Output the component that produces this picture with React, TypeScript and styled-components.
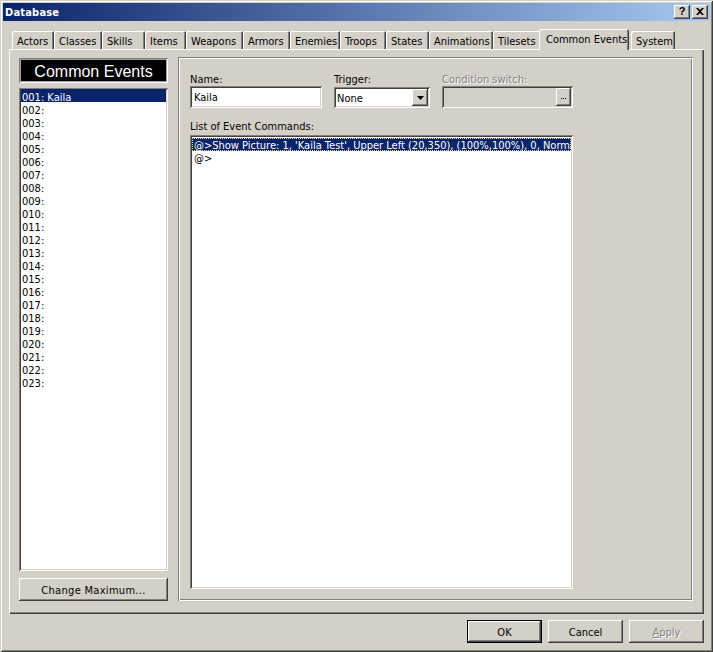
import React from 'react';
import styled, { createGlobalStyle, css } from 'styled-components';

const UI_FONT = `"DejaVu Sans Condensed", "Liberation Sans", sans-serif`;

const GlobalStyle = createGlobalStyle`
    html, body {
        margin: 0;
        padding: 0;
        background: #d4d0c8;
    }
    body {
        font-family: ${UI_FONT};
        font-size: 11px;
        color: #000;
    }
    * {
        box-sizing: border-box;
    }
`;

// classic 3d edges
const raised = css`
    box-shadow: inset -1px -1px 0 #404040, inset 1px 1px 0 #ffffff,
        inset -2px -2px 0 #808080, inset 2px 2px 0 #d4d0c8;
`;

const sunken = css`
    box-shadow: inset 1px 1px 0 #808080, inset -1px -1px 0 #ffffff,
        inset 2px 2px 0 #404040, inset -2px -2px 0 #d4d0c8;
`;

const Window = styled.div`
    width: 713px;
    height: 652px;
    padding: 3px;
    background: #d4d0c8;
    display: flex;
    flex-direction: column;
    box-shadow: inset 1px 1px 0 #d4d0c8, inset -1px -1px 0 #404040,
        inset 2px 2px 0 #ffffff, inset -2px -2px 0 #808080;
`;

const TitleBar = styled.div`
    height: 18px;
    display: flex;
    align-items: center;
    padding: 0 2px 0 2px;
    background: linear-gradient(to right, #0a246a, #a6caf0);
`;

const Title = styled.div`
    flex: 1;
    color: #ffffff;
    font-weight: bold;
    font-size: 11px;
    line-height: 13px;
    letter-spacing: 0.2px;
`;

const CaptionButtons = styled.div`
    display: flex;
    gap: 2px;
`;

const CaptionButton = styled.div`
    width: 16px;
    height: 14px;
    background: #d4d0c8;
    ${raised};
    display: flex;
    align-items: center;
    justify-content: center;
    font-family: "Liberation Sans", sans-serif;
    font-weight: bold;
    font-size: 11px;
    line-height: 11px;
    padding-bottom: 1px;
`;

const Body = styled.div`
    flex: 1;
    display: flex;
    flex-direction: column;
    padding: 8px 6px 6px 6px;
`;

const TabStrip = styled.div`
    position: relative;
    z-index: 1;
    height: 20px;
    display: flex;
    align-items: flex-end;
    padding-left: 3px;
`;

const Tab = styled.div<{ $w: number; $active?: boolean; $gap?: number }>`
    width: ${p => p.$w}px;
    height: ${p => (p.$active ? 21 : 18)}px;
    margin-bottom: ${p => (p.$active ? -1 : 0)}px;
    margin-left: ${p => p.$gap || 0}px;
    padding: ${p => (p.$active ? '4px 0 0 7px' : '4px 0 0 5px')};
    line-height: 13px;
    white-space: nowrap;
    overflow: hidden;
    background: #d4d0c8;
    border-radius: 2px 2px 0 0;
    box-shadow: inset 1px 1px 0 #ffffff, inset -1px 0 0 #404040, inset -2px 0 0 #808080;
`;

const TabPanel = styled.div`
    height: 565px;
    display: flex;
    gap: 10px;
    padding: 8px 11px 13px 10px;
    box-shadow: inset 1px 1px 0 #ffffff, inset -1px -1px 0 #404040,
        inset -2px -2px 0 #808080;
`;

const LeftColumn = styled.div`
    width: 149px;
    margin-top: 1px;
    display: flex;
    flex-direction: column;
`;

const ListHeader = styled.div`
    height: 25px;
    background: #000;
    color: #fff;
    font-family: "Liberation Sans", sans-serif;
    font-size: 16px;
    line-height: 27px;
    text-align: center;
    box-shadow: inset 1px 1px 0 #808080, inset -1px -1px 0 #ffffff,
        inset 2px 2px 0 #a0a0a0, inset -2px -2px 0 #a0a0a0;
`;

const ListBox = styled.div`
    background: #ffffff;
    ${sunken};
    padding: 2px;
    overflow: hidden;
`;

const EventList = styled(ListBox)`
    height: 484px;
    margin-top: 5px;
    padding-top: 1px;
`;

const Row = styled.div<{ $selected?: boolean }>`
    height: 13px;
    line-height: 13px;
    padding: 2px 0 0 1px;
    white-space: nowrap;
    background: ${p => (p.$selected ? '#0a246a' : 'transparent')};
    color: ${p => (p.$selected ? '#ffffff' : '#000000')};
`;

const Button = styled.div<{ $default?: boolean; $disabled?: boolean }>`
    height: 23px;
    padding-top: 1px;
    display: flex;
    align-items: center;
    justify-content: center;
    background: #d4d0c8;
    ${raised};
    ${p =>
        p.$default &&
        css`
            box-shadow: inset 0 0 0 1px #000000, inset -2px -2px 0 #404040,
                inset 2px 2px 0 #ffffff, inset -3px -3px 0 #808080;
        `}
    color: ${p => (p.$disabled ? '#808080' : '#000000')};
    text-shadow: ${p => (p.$disabled ? '1px 1px 0 #ffffff' : 'none')};
`;

const WideButton = styled(Button)`
    margin-top: 7px;
    letter-spacing: 0.3px;
`;

const GroupBox = styled.div`
    flex: 1;
    display: flex;
    flex-direction: column;
    padding: 16px 12px 12px 12px;
    box-shadow: inset 1px 1px 0 #808080, inset 2px 2px 0 #ffffff,
        inset -1px -1px 0 #ffffff, inset -2px -2px 0 #808080;
`;

const FieldRow = styled.div`
    display: flex;
    gap: 12px;
`;

const Field = styled.div<{ $w: number }>`
    width: ${p => p.$w}px;
    display: flex;
    flex-direction: column;
`;

const Label = styled.div<{ $disabled?: boolean }>`
    height: 13px;
    line-height: 13px;
    white-space: nowrap;
    color: ${p => (p.$disabled ? '#808080' : '#000000')};
    text-shadow: ${p => (p.$disabled ? '1px 1px 0 #ffffff' : 'none')};
`;

const TextInput = styled.div<{ $disabled?: boolean }>`
    height: 22px;
    line-height: 18px;
    padding: 3px 4px 1px 4px;
    background: ${p => (p.$disabled ? '#d4d0c8' : '#ffffff')};
    ${sunken};
    display: flex;
    align-items: center;
    justify-content: space-between;
`;

const DisabledInput = styled(TextInput)`
    padding: 2px;
`;

const Select = styled.div`
    height: 21px;
    margin-top: 1px;
    padding: 2px 2px 2px 3px;
    background: #ffffff;
    ${sunken};
    display: flex;
    align-items: center;
    justify-content: space-between;
`;

const SelectValue = styled.span`
    padding-top: 2px;
`;

const DropButton = styled.div`
    width: 16px;
    height: 17px;
    background: #d4d0c8;
    ${raised};
    display: flex;
    align-items: center;
    justify-content: center;
`;

const EllipsisButton = styled.div`
    width: 15px;
    height: 18px;
    background: #d4d0c8;
    ${raised};
    display: flex;
    align-items: flex-end;
    justify-content: center;
    gap: 1px;
    padding-bottom: 7px;
`;

const Dot = styled.span`
    width: 1px;
    height: 1px;
    background: #000;
`;

const SectionLabel = styled(Label)`
    margin-top: 12px;
`;

const CommandList = styled(ListBox)`
    width: 383px;
    flex: 1;
    margin-top: 2px;
    padding-top: 3px;
`;

const CommandRow = styled(Row)`
    padding: 1px 0 0 2px;
    ${p =>
        p.$selected &&
        css`
            outline: 1px dotted #f5db95;
            outline-offset: -1px;
        `}
`;

const ButtonRow = styled.div`
    display: flex;
    justify-content: flex-end;
    gap: 6px;
    margin-top: 6px;
`;

const DialogButton = styled(Button)`
    width: 75px;
`;

const tabs = [
    { label: 'Actors', w: 42 },
    { label: 'Classes', w: 48 },
    { label: 'Skills', w: 43 },
    { label: 'Items', w: 41 },
    { label: 'Weapons', w: 57 },
    { label: 'Armors', w: 47 },
    { label: 'Enemies', w: 50 },
    { label: 'Troops', w: 46 },
    { label: 'States', w: 43 },
    { label: 'Animations', w: 64 },
    { label: 'Tilesets', w: 48 },
    { label: 'Common Events', w: 90, active: true, gap: -2 },
    { label: 'System', w: 44, gap: 2 },
];

const events = Array.from({ length: 23 }, (_, i) => {
    const id = String(i + 1).padStart(3, '0');
    return i === 0 ? `${id}: Kaila` : `${id}:`;
});

const commands = [
    "@>Show Picture: 1, 'Kaila Test', Upper Left (20,350), (100%,100%), 0, Normal",
    '@>',
];

const CloseIcon = () => (
    <svg width="8" height="7" viewBox="0 0 8 7">
        <path d="M0 0h2l2 2 2-2h2L5 3.5 8 7H6L4 5 2 7H0l3-3.5z" fill="#000" />
    </svg>
);

const ArrowDown = () => (
    <svg width="7" height="4" viewBox="0 0 7 4">
        <path d="M0 0h7L3.5 4z" fill="#000" />
    </svg>
);

export default function App() {
    return (
        <>
            <GlobalStyle />
            <Window>
                <TitleBar>
                    <Title>Database</Title>
                    <CaptionButtons>
                        <CaptionButton>?</CaptionButton>
                        <CaptionButton>
                            <CloseIcon />
                        </CaptionButton>
                    </CaptionButtons>
                </TitleBar>

                <Body>
                    <TabStrip>
                        {tabs.map(t => (
                            <Tab key={t.label} $w={t.w} $active={t.active} $gap={t.gap}>
                                {t.label}
                            </Tab>
                        ))}
                    </TabStrip>

                    <TabPanel>
                        <LeftColumn>
                            <ListHeader>Common Events</ListHeader>
                            <EventList>
                                {events.map((e, i) => (
                                    <Row key={e} $selected={i === 0}>
                                        {e}
                                    </Row>
                                ))}
                            </EventList>
                            <WideButton>Change Maximum...</WideButton>
                        </LeftColumn>

                        <GroupBox>
                            <FieldRow>
                                <Field $w={132}>
                                    <Label>Name:</Label>
                                    <TextInput>Kaila</TextInput>
                                </Field>
                                <Field $w={96}>
                                    <Label>Trigger:</Label>
                                    <Select>
                                        <SelectValue>None</SelectValue>
                                        <DropButton>
                                            <ArrowDown />
                                        </DropButton>
                                    </Select>
                                </Field>
                                <Field $w={131}>
                                    <Label $disabled>Condition switch:</Label>
                                    <DisabledInput $disabled>
                                        <span />
                                        <EllipsisButton>
                                            <Dot />
                                            <Dot />
                                            <Dot />
                                        </EllipsisButton>
                                    </DisabledInput>
                                </Field>
                            </FieldRow>

                            <SectionLabel>List of Event Commands:</SectionLabel>
                            <CommandList>
                                {commands.map((c, i) => (
                                    <CommandRow key={i} $selected={i === 0}>
                                        {c}
                                    </CommandRow>
                                ))}
                            </CommandList>
                        </GroupBox>
                    </TabPanel>

                    <ButtonRow>
                        <DialogButton $default>OK</DialogButton>
                        <DialogButton>Cancel</DialogButton>
                        <DialogButton $disabled>
                            <span>
                                <u>A</u>pply
                            </span>
                        </DialogButton>
                    </ButtonRow>
                </Body>
            </Window>
        </>
    );
}
